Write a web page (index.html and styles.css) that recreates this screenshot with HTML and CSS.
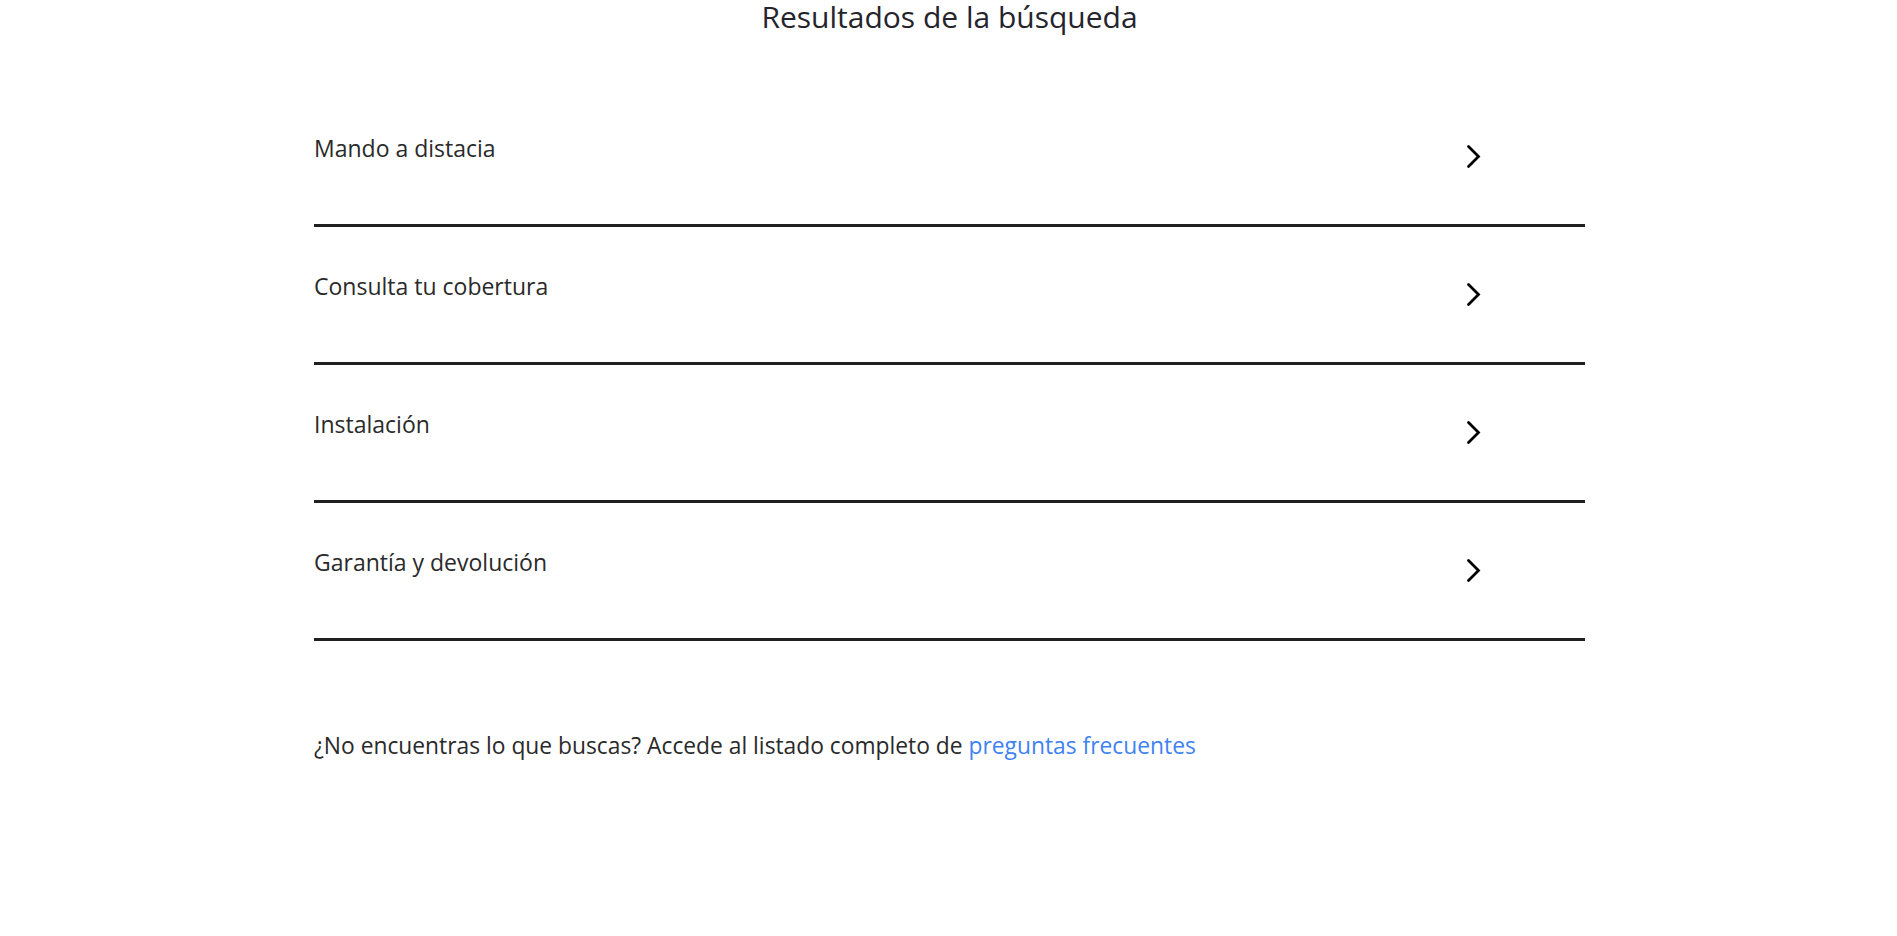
FILE: index.html
```
<!DOCTYPE html>
<html lang="es">
<head>
<meta charset="utf-8">
<title>Resultados de la búsqueda</title>
<link rel="stylesheet" href="styles.css">
</head>
<body>
<main class="page">
  <h1 class="title">Resultados de la búsqueda</h1>
  <ul class="results">
    <li class="result"><a class="result-link" href="#"><span class="result-label">Mando a distacia</span><svg class="chevron" viewBox="0 0 15 25" aria-hidden="true"><polyline points="2.5,2.5 12.5,12.5 2.5,22.5"/></svg></a></li>
    <li class="result"><a class="result-link" href="#"><span class="result-label">Consulta tu cobertura</span><svg class="chevron" viewBox="0 0 15 25" aria-hidden="true"><polyline points="2.5,2.5 12.5,12.5 2.5,22.5"/></svg></a></li>
    <li class="result"><a class="result-link" href="#"><span class="result-label">Instalación</span><svg class="chevron" viewBox="0 0 15 25" aria-hidden="true"><polyline points="2.5,2.5 12.5,12.5 2.5,22.5"/></svg></a></li>
    <li class="result"><a class="result-link" href="#"><span class="result-label">Garantía y devolución</span><svg class="chevron" viewBox="0 0 15 25" aria-hidden="true"><polyline points="2.5,2.5 12.5,12.5 2.5,22.5"/></svg></a></li>
  </ul>
  <p class="more">¿No encuentras lo que buscas? Accede al listado completo de <a class="more-link" href="#">preguntas frecuentes</a></p>
</main>
</body>
</html>
```
FILE: styles.css
```
html, body {
  margin: 0;
  padding: 0;
  background: #ffffff;
}

body {
  font-family: "Open Sans", "Noto Sans", "Liberation Sans", sans-serif;
  color: #212529;
  padding-left: 2px;
}

.page {
  width: 1271px;
  margin: 0 auto;
}

.title {
  margin: 0;
  padding-top: 3px;
  font-size: 30px;
  font-weight: 400;
  line-height: 28px;
  text-align: center;
  color: #25242c;
}

.results {
  list-style: none;
  margin: 58px 0 0 0;
  padding: 0;
}

.result {
  border-bottom: 3px solid #202020;
}

.result-link {
  display: flex;
  justify-content: space-between;
  align-items: flex-start;
  height: 135px;
  padding-right: 104px;
  box-sizing: border-box;
  text-decoration: none;
  color: #2a2a2a;
}

.result-label {
  margin-top: 43px;
  font-size: 23px;
  line-height: 32px;
}

.chevron {
  width: 15px;
  height: 25px;
  margin-top: 55px;
  flex: none;
}

.chevron polyline {
  fill: none;
  stroke: #000000;
  stroke-width: 2.8;
  stroke-linecap: round;
  stroke-linejoin: miter;
}

.more {
  margin: 89px 0 0 0;
  font-size: 22.8px;
  line-height: 32px;
  color: #2a2a2a;
}

.more-link {
  color: #3f82f2;
  text-decoration: none;
}
```
